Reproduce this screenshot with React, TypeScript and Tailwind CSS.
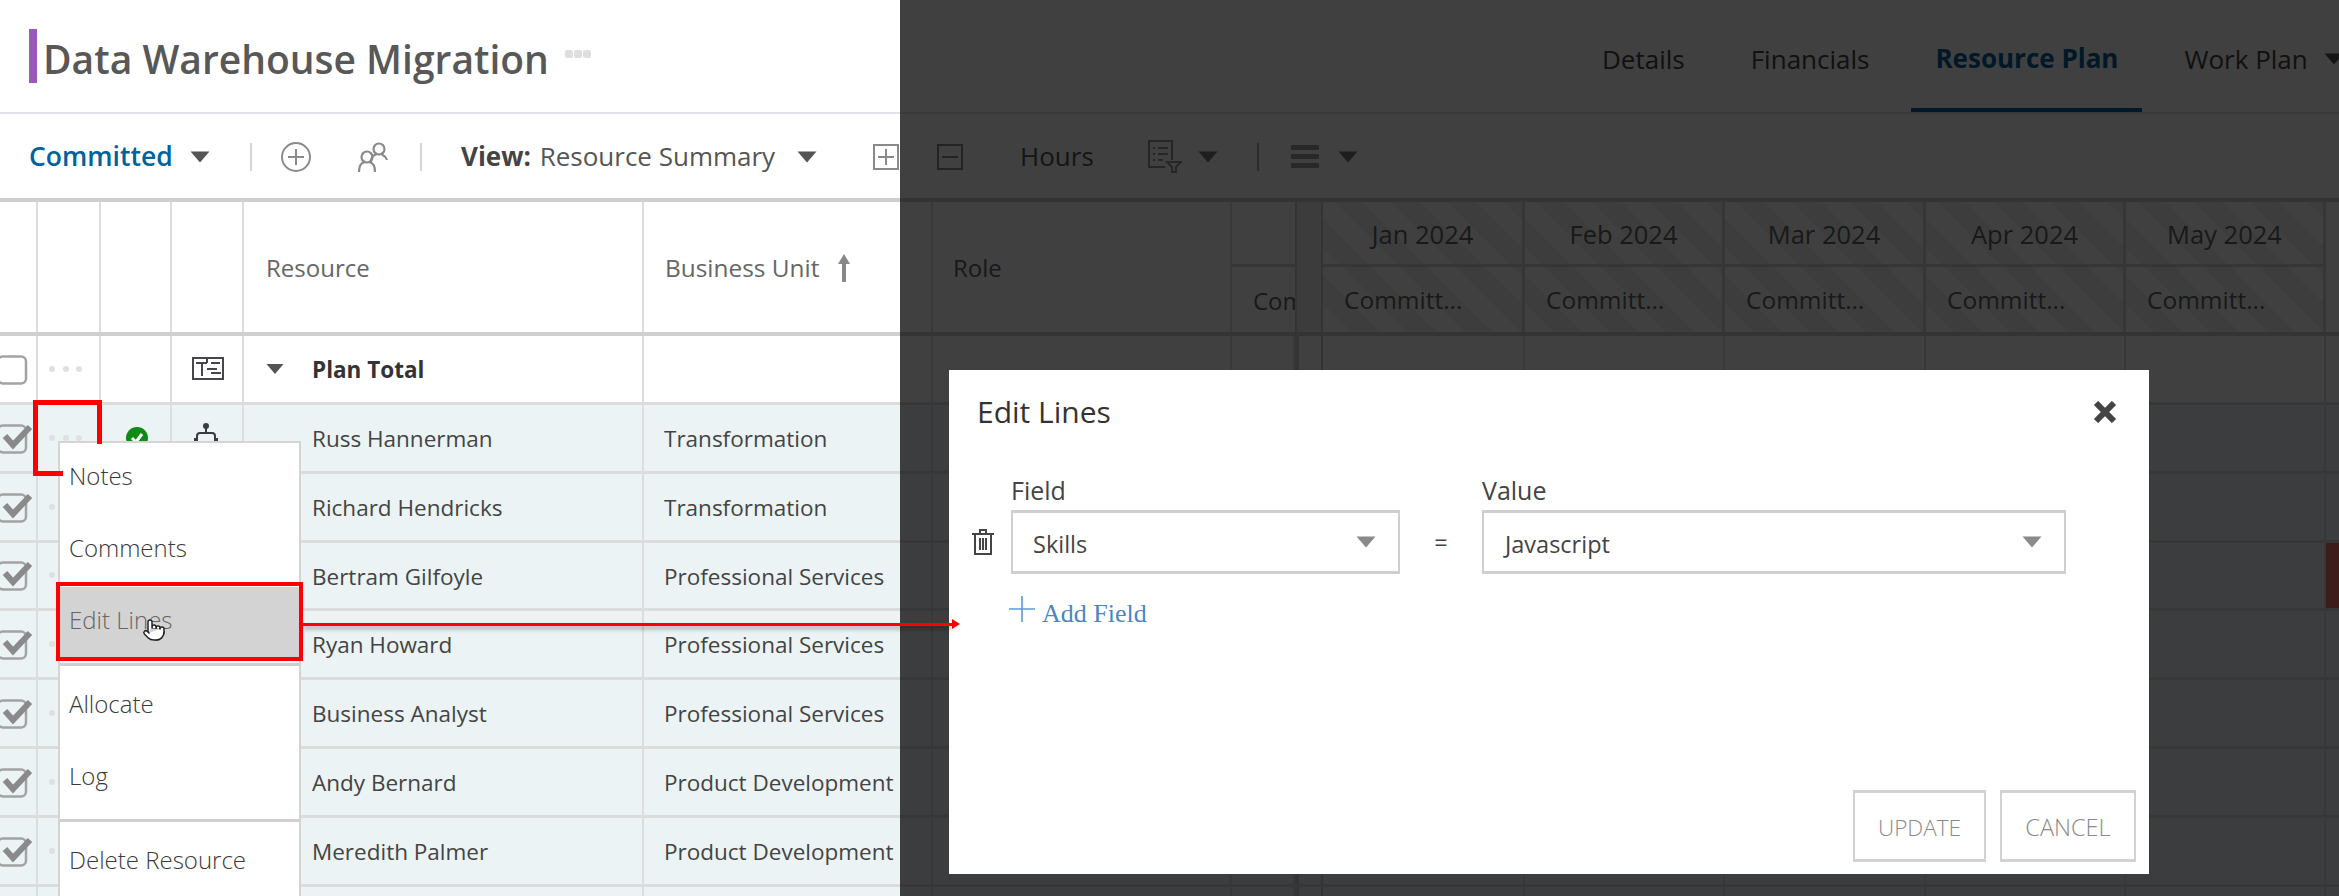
import { Pointer } from 'lucide-react';

const rowGrid =
  'grid h-[68.85px] grid-cols-[38px_63px_71px_72px_400px_289px_299px_63px_28px_202px_200px_201px_200px_200px_1fr] border-b-[3px] border-[#dcdcdc]';
const cell = 'flex items-center border-r-2 border-[#dddddd] overflow-hidden';

const people = [
  ['Russ Hannerman', 'Transformation'],
  ['Richard Hendricks', 'Transformation'],
  ['Bertram Gilfoyle', 'Professional Services'],
  ['Ryan Howard', 'Professional Services'],
  ['Business Analyst', 'Professional Services'],
  ['Andy Bernard', 'Product Development'],
  ['Meredith Palmer', 'Product Development'],
  ['', ''],
];

const months = ['Jan 2024', 'Feb 2024', 'Mar 2024', 'Apr 2024', 'May 2024', ''];

function Caret({ className = 'text-[#555555]', w = 20, h = 12 }: { className?: string; w?: number; h?: number }) {
  return (
    <svg width={w} height={h} viewBox="0 0 20 12" className={`shrink-0 ${className}`}>
      <path d="M0.5 0.5H19.5L10 11.5Z" fill="currentColor" />
    </svg>
  );
}

function Dots() {
  return (
    <div className="ml-[11px] flex gap-[7.5px]">
      <span className="h-[6px] w-[6px] rounded-full bg-[#e0e0e0]" />
      <span className="h-[6px] w-[6px] rounded-full bg-[#e0e0e0]" />
      <span className="h-[6px] w-[6px] rounded-full bg-[#e0e0e0]" />
    </div>
  );
}

function CheckBox({ checked }: { checked: boolean }) {
  return (
    <svg width="34" height="32" viewBox="0 0 34 32" className="shrink-0">
      <rect x="-2" y="3.5" width="28" height="27" rx="5" fill={checked ? 'none' : '#ffffff'} stroke="#a3a3a3" strokeWidth="2.5" />
      {checked && <path d="M5 14L13 23L30 5" fill="none" stroke="#8a8a8a" strokeWidth="6" />}
    </svg>
  );
}

function TreeIcon() {
  return (
    <svg width="32" height="23" viewBox="0 0 32 23" fill="none" stroke="#454550" strokeWidth="2" className="ml-[20px]">
      <rect x="1" y="1" width="30" height="21" />
      <path d="M4 6H15M10 6V19M15 1V6M19 6H28M15 12H25M19 16H29" />
    </svg>
  );
}

function RobotIcon() {
  return (
    <svg width="24" height="30" viewBox="0 0 24 30" fill="none" stroke="#3a3a44" strokeWidth="2" className="ml-[22px]">
      <circle cx="12" cy="3" r="2" fill="#3a3a44" />
      <path d="M12 4V10" />
      <rect x="3" y="10" width="18" height="14" rx="3" />
      <path d="M1 15V22M23 15V22" />
    </svg>
  );
}

function StatusIcon() {
  return (
    <svg width="22" height="22" viewBox="0 0 22 22" className="ml-[25px]">
      <circle cx="11" cy="11" r="11" fill="#0f8a16" />
      <path d="M6 11L10 15L16 7" fill="none" stroke="#ffffff" strokeWidth="3" />
    </svg>
  );
}

function DataRow({ name, unit, index }: { name: string; unit: string; index: number }) {
  return (
    <div className={`${rowGrid} bg-[#ebf3f5] text-[22.5px] text-[#444444]`}>
      <div className={cell}><CheckBox checked /></div>
      <div className={cell}><Dots /></div>
      <div className={cell}><StatusIcon /></div>
      <div className={cell}><RobotIcon /></div>
      <div className={`${cell} pl-[68px] pt-[2px]`}>{name}</div>
      <div className={`${cell} pl-[20px] pt-[2px] whitespace-nowrap`}>{unit}</div>
      <div className={cell} />
      <div className={cell} />
      <div className="border-l-4 border-r-2 border-[#cfcfcf]" />
      <div className={cell} />
      <div className={cell} />
      <div className={cell} />
      <div className={cell} />
      <div className={cell} />
      <div className={index === 2 ? 'bg-[#f87068]' : ''} />
    </div>
  );
}

export default function App() {
  return (
    <div className="relative h-[896px] w-[2339px] overflow-hidden bg-white font-['Open_Sans',sans-serif] text-[#444444]">
      <header className="flex h-[114px] items-center border-b-2 border-[#e2e2e8]">
        <div className="ml-[29px] h-[54px] w-[8px] shrink-0 bg-[#9b59b6]" />
        <h1 className="ml-[6px] mt-[7px] whitespace-nowrap text-[39px] font-semibold text-[#585858]">Data Warehouse Migration</h1>
        <div className="ml-[16px] mt-[-4px] flex gap-[1px]">
          <span className="h-[8px] w-[8px] rounded-[2px] bg-[#dedede]" />
          <span className="h-[8px] w-[8px] rounded-[2px] bg-[#dedede]" />
          <span className="h-[8px] w-[8px] rounded-[2px] bg-[#dedede]" />
        </div>
        <nav className="ml-auto flex h-full w-[761px] shrink-0 gap-[18px] whitespace-nowrap text-[26px] text-[#444444]">
          <div className="flex items-center px-6 pt-[6px]">Details</div>
          <div className="flex items-center px-6 pt-[6px]">Financials</div>
          <div className="flex items-center border-b-4 border-[#00629b] px-6 pt-[8px] font-bold text-[#00629b]">Resource Plan</div>
          <div className="flex items-center gap-[16px] pl-6 pt-[6px]">Work Plan<Caret className="text-[#555555]" /></div>
        </nav>
      </header>

      <div className="flex h-[88px] items-center border-b-4 border-[#cfcfcf] whitespace-nowrap pt-[1px] text-[26px]">
        <div className="ml-[29px] w-[161px] text-[26.5px] font-semibold text-[#00629b]">Committed</div>
        <Caret />
        <div className="ml-[40px] h-[28px] w-[2px] bg-[#d5d5d5]" />
        <svg width="30" height="30" viewBox="0 0 30 30" fill="none" stroke="#8a8a8a" strokeWidth="2" className="ml-[29px]">
          <circle cx="15" cy="15" r="14" />
          <path d="M15 7V23M7 15H23" />
        </svg>
        <svg width="30" height="30" viewBox="0 0 30 30" fill="none" stroke="#8a8a8a" strokeWidth="2.2" className="ml-[47px]">
          <circle cx="21" cy="7" r="5.5" />
          <path d="M13 20C13 15 16 13 18 12.5M24 12.5C26 13.5 28 15 29 18" />
          <circle cx="9" cy="15" r="5.5" />
          <path d="M1 30C1 24 3 21 6 20.5M12 20.5C15 21 17 24 17 30" />
        </svg>
        <div className="ml-[32px] h-[28px] w-[2px] bg-[#d5d5d5]" />
        <div className="ml-[39px] w-[336px]"><span className="font-bold">View:</span> <span className="ml-[2px] text-[#555555]">Resource Summary</span></div>
        <Caret />
        <div className="ml-[56px] flex h-[26px] w-[26px] items-center justify-center border-2 border-[#8a8a8a]">
          <svg width="18" height="18" viewBox="0 0 18 18" stroke="#8a8a8a" strokeWidth="2"><path d="M9 1V17M1 9H17" /></svg>
        </div>
        <div className="ml-[38px] flex h-[26px] w-[26px] items-center justify-center border-2 border-[#8a8a8a]">
          <svg width="18" height="18" viewBox="0 0 18 18" stroke="#8a8a8a" strokeWidth="2"><path d="M1 9H17" /></svg>
        </div>
        <div className="ml-[57px] w-[128px] text-[#555555]">Hours</div>
        <svg width="34" height="33" viewBox="0 0 34 33" fill="none" stroke="#999999" strokeWidth="2">
          <path d="M17 27H1V1H24V20" />
          <path d="M5 8H7M10 8H20M5 14H7M10 14H20M5 20H7M10 20H15" />
          <path d="M19 22H33L28 27V32H24V27Z" />
        </svg>
        <Caret className="ml-[16px] text-[#777777]" />
        <div className="ml-[39px] h-[28px] w-[2px] bg-[#b0b0b0]" />
        <div className="ml-[32px] flex w-[28px] flex-col gap-[4px]">
          <span className="h-[5px] rounded-[1px] bg-[#a0a0a0]" />
          <span className="h-[5px] rounded-[1px] bg-[#a0a0a0]" />
          <span className="h-[5px] rounded-[1px] bg-[#a0a0a0]" />
        </div>
        <Caret className="ml-[19px] text-[#777777]" />
      </div>

      <div className="grid h-[134px] grid-cols-[38px_63px_71px_72px_400px_289px_299px_63px_28px_202px_200px_201px_200px_200px_1fr] border-b-4 border-[#cfcfcf] text-[24px] text-[#666666]">
        <div className={cell} />
        <div className={cell} />
        <div className={cell} />
        <div className={cell} />
        <div className={`${cell} pl-[22px] pt-[2px]`}>Resource</div>
        <div className={`${cell} gap-[18px] pl-[21px] pt-[2px] whitespace-nowrap text-[24.4px]`}>
          Business Unit
          <svg width="14" height="28" viewBox="0 0 14 28" fill="#888888"><path d="M7 0L13 10H9V28H5V10H1Z" /></svg>
        </div>
        <div className={`${cell} pl-[20px] pt-[2px]`}>Role</div>
        <div className="flex flex-col overflow-hidden">
          <div className="h-[65px] border-b-[3px] border-[#d5d5d5]" />
          <div className="flex flex-1 items-center pl-[21px] pt-[2px]">Committed</div>
        </div>
        <div className="border-x-2 border-[#cfcfcf] bg-[#f0f0f0]" />
        {months.map((month) =>
          month ? (
            <div key={month} className="flex flex-col border-r-[3px] border-[#d5d5d5] bg-[repeating-linear-gradient(45deg,#ffffff_0_20px,#f3f3f3_20px_40px)]">
              <div className="flex h-[65px] items-center justify-center border-b-[3px] border-[#d5d5d5] pt-[3px] text-[25.5px]">{month}</div>
              <div className="flex flex-1 items-center pl-[21px] pt-[2px] text-[24.5px]">Committ...</div>
            </div>
          ) : (
            <div key="rest" />
          ),
        )}
      </div>

      <div className={`${rowGrid} text-[22.5px] font-bold text-[#333333]`}>
        <div className={cell}><CheckBox checked={false} /></div>
        <div className={cell}><Dots /></div>
        <div className={cell} />
        <div className={cell}><TreeIcon /></div>
        <div className={`${cell} gap-[28px] pl-[22px]`}><Caret w={18} h={12} /><span className="pt-[2px]">Plan Total</span></div>
        <div className={cell} />
        <div className={cell} />
        <div className={cell} />
        <div className="border-l-4 border-r-2 border-[#cfcfcf]" />
        <div className={cell} />
        <div className={cell} />
        <div className={cell} />
        <div className={cell} />
        <div className={cell} />
        <div />
      </div>
      {people.map(([name, unit], index) => (
        <DataRow key={index} name={name} unit={unit} index={index} />
      ))}

      <div className="absolute bottom-0 left-[900px] right-0 top-0 bg-black/75" />

      {/* context menu */}
      <div className="absolute bottom-0 left-[58px] top-[441px] w-[243px] border-2 border-b-0 border-[#d4d4d4] bg-white text-[24px] font-light text-[#3a3a3a]">
        <div className="flex h-[72px] items-center pb-[7px] pl-[9px]">Notes</div>
        <div className="flex h-[72px] items-center pb-[7px] pl-[9px]">Comments</div>
        <div className="flex h-[72px] items-center bg-[#d3d3d3] pb-[7px] pl-[9px] text-[#666666]">Edit Lines</div>
        <div className="mb-[5px] mt-[4px] h-[3px] bg-[#cfcfcf]" />
        <div className="flex h-[72px] items-center pb-[7px] pl-[9px]">Allocate</div>
        <div className="flex h-[72px] items-center pb-[6px] pl-[9px]">Log</div>
        <div className="my-[4px] h-[3px] bg-[#cfcfcf]" />
        <div className="flex h-[72px] items-center pb-[4px] pl-[9px]">Delete Resource</div>
      </div>
      <Pointer size={24} fill="#ffffff" stroke="#222222" strokeWidth={1.5} className="absolute left-[142px] top-[618px]" />

      {/* dialog */}
      <div className="absolute left-[949px] top-[370px] flex h-[504px] w-[1200px] flex-col bg-white">
        <div className="flex h-[84px] shrink-0 items-center justify-between pl-[28px] pr-[32px]">
          <h2 className="pb-[1px] text-[30px] text-[#333333]">Edit Lines</h2>
          <svg width="24" height="22" viewBox="0 0 24 22" stroke="#444444" strokeWidth="6"><path d="M3 2L21 20M21 2L3 20" /></svg>
        </div>
        <div className="ml-[23px] mt-[18px] grid grid-cols-[39px_389px_82px_584px] text-[23.5px] text-[#444444]">
          <div />
          <div className="flex h-[38px] items-center text-[25px]">Field</div>
          <div />
          <div className="flex h-[38px] items-center text-[25px]">Value</div>
          <svg width="22" height="26" viewBox="0 0 22 26" fill="none" stroke="#444444" strokeWidth="2" className="self-center">
            <path d="M0 5H22M8 5V1H14V5M3 5V25H19V5M8 9V21M11 9V21M14 9V21" />
          </svg>
          <div className="flex h-[64px] items-center justify-between border-x-2 border-y-[3px] border-[#cfcfcf] pl-[20px] pr-[22px]"><span className="pt-[6px]">Skills</span><Caret className="text-[#8a8a8a]" /></div>
          <div className="flex items-center justify-center pt-[2px]">=</div>
          <div className="flex h-[64px] items-center justify-between border-x-2 border-y-[3px] border-[#cfcfcf] pl-[21px] pr-[22px]"><span className="pt-[6px]">Javascript</span><Caret className="text-[#8a8a8a]" /></div>
        </div>
        <div className="ml-[60px] mt-[10px] flex items-center gap-[7px] font-['Liberation_Serif',serif] text-[26px] text-[#4a86c5]">
          <svg width="26" height="26" viewBox="0 0 26 26" stroke="#5b9bd5" strokeWidth="1.6"><path d="M13 0V26M0 13H26" /></svg>
          <span className="mt-[10px]">Add Field</span>
        </div>
        <div className="mt-auto flex justify-end gap-[14px] pb-[12px] pr-[13px] font-light text-[#8a8a8a]">
          <div className="flex h-[72px] w-[133px] items-center justify-center border-x-2 border-y-[3px] border-[#d2d2d2] pt-[3px] text-[22.5px]">UPDATE</div>
          <div className="flex h-[72px] w-[136px] items-center justify-center border-x-2 border-y-[3px] border-[#d2d2d2] pt-[3px] text-[23.5px]">CANCEL</div>
        </div>
      </div>

      {/* red callouts */}
      <svg width="110" height="80" viewBox="0 0 110 80" fill="none" stroke="#ff0000" strokeWidth="5" className="absolute left-0 top-[398px]">
        <path d="M99.5 46V4.5H35.5V75.5H63" />
      </svg>
      <div className="absolute left-[56px] top-[582px] h-[79px] w-[247px] border-4 border-[#ff0000]" />
      <div className="absolute left-[303px] top-[623px] h-[3px] w-[650px] bg-[#ff0000] shadow-[0_3px_4px_rgba(0,0,0,0.35)]" />
      <svg width="8" height="10" viewBox="0 0 8 10" className="absolute left-[952px] top-[619px]">
        <path d="M0 0L8 5L0 10Z" fill="#ff0000" />
      </svg>
    </div>
  );
}
